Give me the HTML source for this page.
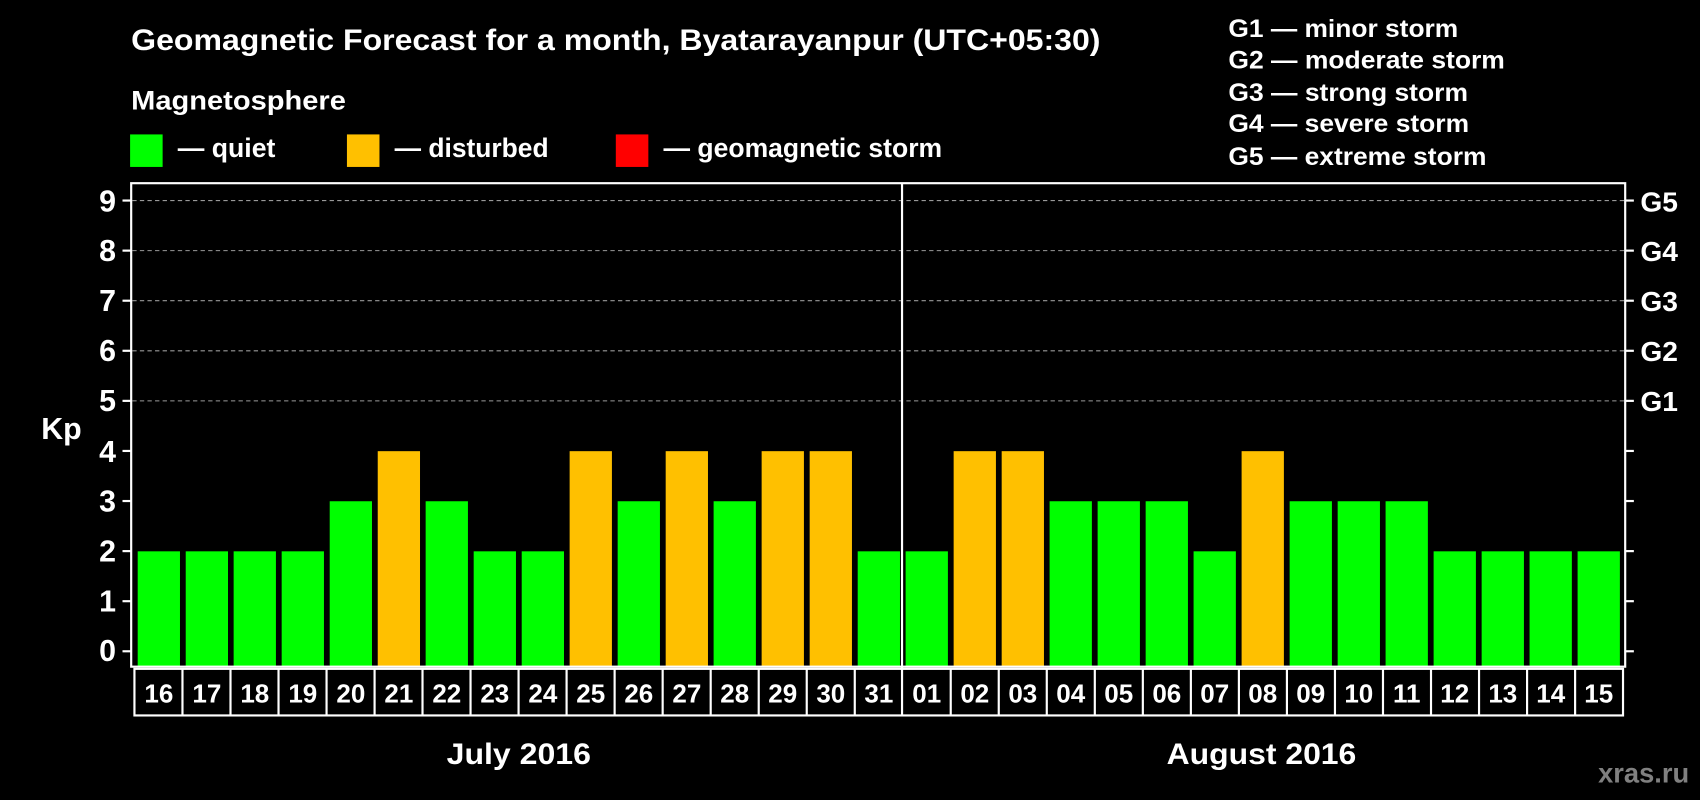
<!DOCTYPE html>
<html><head><meta charset="utf-8"><style>
html,body{margin:0;padding:0;background:#000;width:1700px;height:800px;overflow:hidden}
svg{display:block}
text{font-family:"Liberation Sans",Arial,sans-serif;font-weight:bold;fill:#fff}
</style></head><body>
<svg width="1700" height="800" viewBox="0 0 1568 738" preserveAspectRatio="none">
<rect width="1568" height="738" fill="#000"/>
<text x="121" y="46" font-size="27" textLength="894" lengthAdjust="spacingAndGlyphs">Geomagnetic Forecast for a month, Byatarayanpur (UTC+05:30)</text>
<text x="121" y="101" font-size="25" textLength="198" lengthAdjust="spacingAndGlyphs">Magnetosphere</text>
<rect x="120" y="124" width="30" height="30" fill="#00ff00"/>
<text x="164" y="145" font-size="25" textLength="90" lengthAdjust="spacingAndGlyphs">— quiet</text>
<rect x="320" y="124" width="30" height="30" fill="#ffc000"/>
<text x="364" y="145" font-size="25" textLength="142" lengthAdjust="spacingAndGlyphs">— disturbed</text>
<rect x="568" y="124" width="30" height="30" fill="#ff0000"/>
<text x="612" y="145" font-size="25" textLength="257" lengthAdjust="spacingAndGlyphs">— geomagnetic storm</text>
<text x="1133" y="34" font-size="23" textLength="212" lengthAdjust="spacingAndGlyphs">G1 — minor storm</text>
<text x="1133" y="63" font-size="23" textLength="255" lengthAdjust="spacingAndGlyphs">G2 — moderate storm</text>
<text x="1133" y="93" font-size="23" textLength="221" lengthAdjust="spacingAndGlyphs">G3 — strong storm</text>
<text x="1133" y="122" font-size="23" textLength="222" lengthAdjust="spacingAndGlyphs">G4 — severe storm</text>
<text x="1133" y="152" font-size="23" textLength="238" lengthAdjust="spacingAndGlyphs">G5 — extreme storm</text>
<g stroke="#999" stroke-width="1" stroke-dasharray="4,3">
<line x1="122" y1="185" x2="1499" y2="185"/>
<line x1="122" y1="231.2" x2="1499" y2="231.2"/>
<line x1="122" y1="277.4" x2="1499" y2="277.4"/>
<line x1="122" y1="323.6" x2="1499" y2="323.6"/>
<line x1="122" y1="369.8" x2="1499" y2="369.8"/>
</g>
<g>
<rect x="127" y="508.6" width="39" height="106.4" fill="#00ff00"/>
<rect x="171.3" y="508.6" width="39" height="106.4" fill="#00ff00"/>
<rect x="215.5" y="508.6" width="39" height="106.4" fill="#00ff00"/>
<rect x="259.8" y="508.6" width="39" height="106.4" fill="#00ff00"/>
<rect x="304.1" y="462.4" width="39" height="152.6" fill="#00ff00"/>
<rect x="348.4" y="416.2" width="39" height="198.8" fill="#ffc000"/>
<rect x="392.6" y="462.4" width="39" height="152.6" fill="#00ff00"/>
<rect x="436.9" y="508.6" width="39" height="106.4" fill="#00ff00"/>
<rect x="481.2" y="508.6" width="39" height="106.4" fill="#00ff00"/>
<rect x="525.4" y="416.2" width="39" height="198.8" fill="#ffc000"/>
<rect x="569.7" y="462.4" width="39" height="152.6" fill="#00ff00"/>
<rect x="614" y="416.2" width="39" height="198.8" fill="#ffc000"/>
<rect x="658.2" y="462.4" width="39" height="152.6" fill="#00ff00"/>
<rect x="702.5" y="416.2" width="39" height="198.8" fill="#ffc000"/>
<rect x="746.8" y="416.2" width="39" height="198.8" fill="#ffc000"/>
<rect x="791.1" y="508.6" width="39" height="106.4" fill="#00ff00"/>
<rect x="835.3" y="508.6" width="39" height="106.4" fill="#00ff00"/>
<rect x="879.6" y="416.2" width="39" height="198.8" fill="#ffc000"/>
<rect x="923.9" y="416.2" width="39" height="198.8" fill="#ffc000"/>
<rect x="968.1" y="462.4" width="39" height="152.6" fill="#00ff00"/>
<rect x="1012.4" y="462.4" width="39" height="152.6" fill="#00ff00"/>
<rect x="1056.7" y="462.4" width="39" height="152.6" fill="#00ff00"/>
<rect x="1100.9" y="508.6" width="39" height="106.4" fill="#00ff00"/>
<rect x="1145.2" y="416.2" width="39" height="198.8" fill="#ffc000"/>
<rect x="1189.5" y="462.4" width="39" height="152.6" fill="#00ff00"/>
<rect x="1233.8" y="462.4" width="39" height="152.6" fill="#00ff00"/>
<rect x="1278" y="462.4" width="39" height="152.6" fill="#00ff00"/>
<rect x="1322.3" y="508.6" width="39" height="106.4" fill="#00ff00"/>
<rect x="1366.6" y="508.6" width="39" height="106.4" fill="#00ff00"/>
<rect x="1410.8" y="508.6" width="39" height="106.4" fill="#00ff00"/>
<rect x="1455.1" y="508.6" width="39" height="106.4" fill="#00ff00"/>
</g>
<rect x="121" y="169" width="1378" height="446" fill="none" stroke="#fff" stroke-width="2"/>
<line x1="832" y1="169" x2="832" y2="660" stroke="#fff" stroke-width="2"/>
<g stroke="#fff" stroke-width="2">
<line x1="113" y1="185" x2="121" y2="185"/><line x1="113" y1="231.2" x2="121" y2="231.2"/><line x1="113" y1="277.4" x2="121" y2="277.4"/><line x1="113" y1="323.6" x2="121" y2="323.6"/><line x1="113" y1="369.8" x2="121" y2="369.8"/><line x1="113" y1="416" x2="121" y2="416"/><line x1="113" y1="462.2" x2="121" y2="462.2"/><line x1="113" y1="508.4" x2="121" y2="508.4"/><line x1="113" y1="554.6" x2="121" y2="554.6"/><line x1="113" y1="600.8" x2="121" y2="600.8"/>
<line x1="1499" y1="185" x2="1507" y2="185"/><line x1="1499" y1="231.2" x2="1507" y2="231.2"/><line x1="1499" y1="277.4" x2="1507" y2="277.4"/><line x1="1499" y1="323.6" x2="1507" y2="323.6"/><line x1="1499" y1="369.8" x2="1507" y2="369.8"/><line x1="1499" y1="416" x2="1507" y2="416"/><line x1="1499" y1="462.2" x2="1507" y2="462.2"/><line x1="1499" y1="508.4" x2="1507" y2="508.4"/><line x1="1499" y1="554.6" x2="1507" y2="554.6"/><line x1="1499" y1="600.8" x2="1507" y2="600.8"/>
</g>
<g font-size="28" text-anchor="end">
<text x="107" y="195">9</text><text x="107" y="241">8</text><text x="107" y="287">7</text><text x="107" y="333">6</text><text x="107" y="379">5</text><text x="107" y="426">4</text><text x="107" y="472">3</text><text x="107" y="518">2</text><text x="107" y="564">1</text><text x="107" y="610">0</text>
</g>
<text x="38" y="405" font-size="28">Kp</text>
<g font-size="26">
<text x="1513" y="195">G5</text><text x="1513" y="241">G4</text><text x="1513" y="287">G3</text><text x="1513" y="333">G2</text><text x="1513" y="379">G1</text>
</g>
<rect x="124" y="617" width="1373" height="43" fill="none" stroke="#fff" stroke-width="2"/>
<g stroke="#fff" stroke-width="2">
<line x1="168.3" y1="617" x2="168.3" y2="660"/><line x1="212.6" y1="617" x2="212.6" y2="660"/><line x1="256.9" y1="617" x2="256.9" y2="660"/><line x1="301.2" y1="617" x2="301.2" y2="660"/><line x1="345.5" y1="617" x2="345.5" y2="660"/><line x1="389.7" y1="617" x2="389.7" y2="660"/><line x1="434" y1="617" x2="434" y2="660"/><line x1="478.3" y1="617" x2="478.3" y2="660"/><line x1="522.6" y1="617" x2="522.6" y2="660"/><line x1="566.9" y1="617" x2="566.9" y2="660"/><line x1="611.2" y1="617" x2="611.2" y2="660"/><line x1="655.5" y1="617" x2="655.5" y2="660"/><line x1="699.8" y1="617" x2="699.8" y2="660"/><line x1="744.1" y1="617" x2="744.1" y2="660"/><line x1="788.4" y1="617" x2="788.4" y2="660"/><line x1="876.9" y1="617" x2="876.9" y2="660"/><line x1="921.2" y1="617" x2="921.2" y2="660"/><line x1="965.5" y1="617" x2="965.5" y2="660"/><line x1="1009.8" y1="617" x2="1009.8" y2="660"/><line x1="1054.1" y1="617" x2="1054.1" y2="660"/><line x1="1098.4" y1="617" x2="1098.4" y2="660"/><line x1="1142.7" y1="617" x2="1142.7" y2="660"/><line x1="1187" y1="617" x2="1187" y2="660"/><line x1="1231.3" y1="617" x2="1231.3" y2="660"/><line x1="1275.6" y1="617" x2="1275.6" y2="660"/><line x1="1319.9" y1="617" x2="1319.9" y2="660"/><line x1="1364.2" y1="617" x2="1364.2" y2="660"/><line x1="1408.5" y1="617" x2="1408.5" y2="660"/><line x1="1452.8" y1="617" x2="1452.8" y2="660"/>
</g>
<g font-size="24" text-anchor="middle">
<text x="146.5" y="648">16</text><text x="190.8" y="648">17</text><text x="235" y="648">18</text><text x="279.3" y="648">19</text><text x="323.6" y="648">20</text><text x="367.9" y="648">21</text><text x="412.1" y="648">22</text><text x="456.4" y="648">23</text><text x="500.7" y="648">24</text><text x="544.9" y="648">25</text><text x="589.2" y="648">26</text><text x="633.5" y="648">27</text><text x="677.7" y="648">28</text><text x="722" y="648">29</text><text x="766.3" y="648">30</text><text x="810.6" y="648">31</text><text x="854.8" y="648">01</text><text x="899.1" y="648">02</text><text x="943.4" y="648">03</text><text x="987.6" y="648">04</text><text x="1031.9" y="648">05</text><text x="1076.2" y="648">06</text><text x="1120.4" y="648">07</text><text x="1164.7" y="648">08</text><text x="1209" y="648">09</text><text x="1253.3" y="648">10</text><text x="1297.5" y="648">11</text><text x="1341.8" y="648">12</text><text x="1386.1" y="648">13</text><text x="1430.3" y="648">14</text><text x="1474.6" y="648">15</text>
</g>
<text x="412" y="705" font-size="27" textLength="133" lengthAdjust="spacingAndGlyphs">July 2016</text>
<text x="1076" y="705" font-size="27" textLength="175" lengthAdjust="spacingAndGlyphs">August 2016</text>
<text x="1474" y="722" font-size="26" textLength="84" lengthAdjust="spacingAndGlyphs" style="fill:#808080">xras.ru</text>
</svg>
</body></html>
